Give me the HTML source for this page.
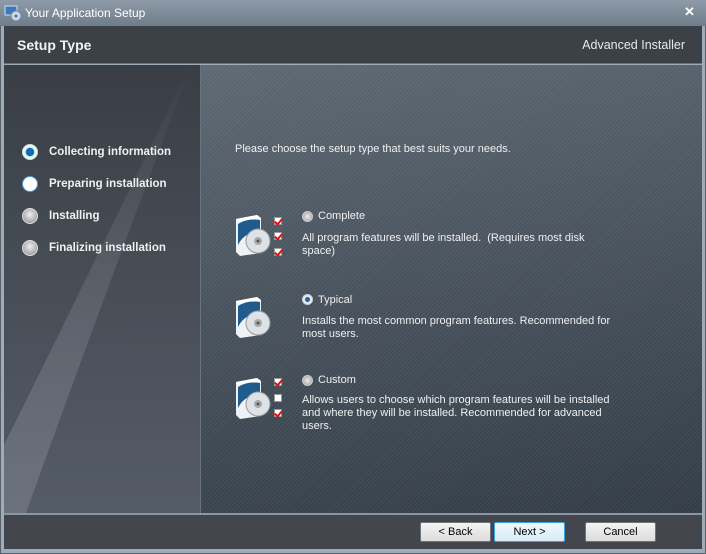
<!DOCTYPE html>
<html><head><style>
*{margin:0;padding:0;box-sizing:border-box}
body{width:706px;height:554px;overflow:hidden;background:#b8c4cf;font-family:"Liberation Sans",sans-serif;position:relative}
.win{position:absolute;left:0;top:0;width:706px;height:554px;border:1px solid #5a6068;background:linear-gradient(#c9d3dc,#9eabb8 25px);}
.title{position:absolute;left:0;top:0;width:706px;height:26px;background:linear-gradient(#8d9aa7,#6f7d8b);}
.title span{position:absolute;left:25px;top:6px;font-size:12px;color:#fff;}
.hdr{position:absolute;left:4px;top:26px;width:698px;height:38px;background:#3c4148;border-bottom:1px solid #6a7079}
.hdr b{position:absolute;left:13px;top:11px;color:#f2f2f2;font-size:14px;font-weight:bold}
.hdr i{position:absolute;right:17px;top:12px;color:#e8e8e8;font-size:12.5px;font-style:normal}
.left{position:absolute;left:4px;top:65px;width:197px;height:448px;background:linear-gradient(#393e45,#454b53 40%,#555c66);overflow:hidden;border-right:1px solid #6b737c}
.right{position:absolute;left:201px;top:65px;width:501px;height:448px;background:repeating-linear-gradient(135deg,rgba(255,255,255,0.06) 0 1px,transparent 1px 3px),linear-gradient(170deg,#5d6872,#47515b 50%,#323c46);}
.foot{position:absolute;left:4px;top:513px;width:698px;height:36px;background:#43474d;border-top:2px solid #8a96a2}
.step{position:absolute;left:18px;color:#f0f0f0;font-size:11.5px;font-weight:bold}
.step .r{position:absolute;left:0;top:-2px;width:16px;height:16px;border-radius:50%;background:radial-gradient(circle at 50% 40%,#eee,#888);border:1px solid #ddd}
.step span{position:absolute;left:27px;top:0;white-space:nowrap}
.txt{position:absolute;color:#f0f0f0;font-size:11px;line-height:13px}
.rad{position:absolute;width:11px;height:11px;border-radius:50%;background:radial-gradient(circle,#eee,#999);border:1px solid #ccc}
.ico{position:absolute;width:38px;height:44px}
.btn{position:absolute;top:522px;height:20px;width:71px;border:1px solid #70757a;border-radius:2px;background:linear-gradient(#f4f4f4,#dcdcdc);font-size:11px;text-align:center;line-height:18px;color:#000}
.cb{position:absolute;width:8px;height:8px;background:#fff;border:1px solid #999}
.cb.c::after{content:"";position:absolute;left:1px;top:-1px;width:3px;height:6px;border:solid #e01010;border-width:0 2px 2px 0;transform:rotate(40deg)}
</style></head><body>
<div class="win"></div>
<div class="title">
<svg style="position:absolute;left:4px;top:4px" width="18" height="18"><rect x="1" y="2" width="12" height="9" fill="#3a78c0" stroke="#dde" /><circle cx="12" cy="12" r="5" fill="#cfd8e0" stroke="#789"/><circle cx="12" cy="12" r="1.5" fill="#3a78c0"/></svg>
<span>Your Application Setup</span>
<span style="left:684px;top:4px;font-weight:bold;font-size:13px">✕</span>
</div>
<div class="hdr"><b>Setup Type</b><i>Advanced Installer</i></div>
<div class="left">
<svg width="197" height="448" style="position:absolute;left:0;top:0"><defs><linearGradient id="g" x1="0" y1="0" x2="0" y2="1"><stop offset="0" stop-color="#6c727b" stop-opacity="0"/><stop offset="0.5" stop-color="#6c727b" stop-opacity=".5"/><stop offset="1" stop-color="#6c727b" stop-opacity="1"/></linearGradient></defs><path d="M0,448 L22,448 Q100,230 188,0 L186,0 Q60,260 0,380 Z" fill="url(#g)"/></svg>
<div class="step" style="top:81px"><div class="r" style="background:radial-gradient(circle,#1d66b8 40%,#cfe 45%,#fff);"></div><span>Collecting information</span></div>
<div class="step" style="top:113px"><div class="r" style="background:#fff;border-color:#4a9be0"></div><span>Preparing installation</span></div>
<div class="step" style="top:145px"><div class="r"></div><span>Installing</span></div>
<div class="step" style="top:177px"><div class="r"></div><span>Finalizing installation</span></div>
</div>
<div class="right"></div>
<div class="txt" style="left:235px;top:143px">Please choose the setup type that best suits your needs.</div>

<svg class="ico" style="left:233px;top:213px" viewBox="0 0 38 44"><path d="M3,6 L24,2 L28,5 L28,40 L7,43 L3,39Z" fill="#eef2f6"/><path d="M3,6 L24,2 L28,5 L7,9Z" fill="#fff"/><path d="M5,11 Q14,5 27,7 L27,20 Q12,18 5,32Z" fill="#1f5b8c"/><circle cx="25" cy="28" r="12" fill="#dde2e8" stroke="#999"/><circle cx="25" cy="28" r="4" fill="#aaa"/><circle cx="25" cy="28" r="1.5" fill="#555"/></svg>
<svg class="ico" style="left:233px;top:295px" viewBox="0 0 38 44"><path d="M3,6 L24,2 L28,5 L28,40 L7,43 L3,39Z" fill="#eef2f6"/><path d="M3,6 L24,2 L28,5 L7,9Z" fill="#fff"/><path d="M5,11 Q14,5 27,7 L27,20 Q12,18 5,32Z" fill="#1f5b8c"/><circle cx="25" cy="28" r="12" fill="#dde2e8" stroke="#999"/><circle cx="25" cy="28" r="4" fill="#aaa"/><circle cx="25" cy="28" r="1.5" fill="#555"/></svg>
<svg class="ico" style="left:233px;top:376px" viewBox="0 0 38 44"><path d="M3,6 L24,2 L28,5 L28,40 L7,43 L3,39Z" fill="#eef2f6"/><path d="M3,6 L24,2 L28,5 L7,9Z" fill="#fff"/><path d="M5,11 Q14,5 27,7 L27,20 Q12,18 5,32Z" fill="#1f5b8c"/><circle cx="25" cy="28" r="12" fill="#dde2e8" stroke="#999"/><circle cx="25" cy="28" r="4" fill="#aaa"/><circle cx="25" cy="28" r="1.5" fill="#555"/></svg>
<div class="cb c" style="left:274px;top:217px"></div>
<div class="cb c" style="left:274px;top:232px"></div>
<div class="cb c" style="left:274px;top:248px"></div>
<div class="cb c" style="left:274px;top:378px"></div>
<div class="cb" style="left:274px;top:394px"></div>
<div class="cb c" style="left:274px;top:409px"></div>

<div class="rad" style="left:302px;top:211px"></div>
<div class="txt" style="left:318px;top:210px">Complete</div>
<div class="txt" style="left:302px;top:232px">All program features will be installed.&nbsp; (Requires most disk<br>space)</div>
<div class="rad" style="left:302px;top:294px;background:radial-gradient(circle,#1d66b8 35%,#eee 45%)"></div>
<div class="txt" style="left:318px;top:294px">Typical</div>
<div class="txt" style="left:302px;top:315px">Installs the most common program features. Recommended for<br>most users.</div>
<div class="rad" style="left:302px;top:375px"></div>
<div class="txt" style="left:318px;top:374px">Custom</div>
<div class="txt" style="left:302px;top:394px">Allows users to choose which program features will be installed<br>and where they will be installed. Recommended for advanced<br>users.</div>

<div class="foot"></div>
<div class="btn" style="left:420px">&lt; Back</div>
<div class="btn" style="left:494px;border-color:#3aa6e0;background:linear-gradient(#f0f8fd,#d6ebf7)">Next &gt;</div>
<div class="btn" style="left:585px">Cancel</div>
</body></html>
